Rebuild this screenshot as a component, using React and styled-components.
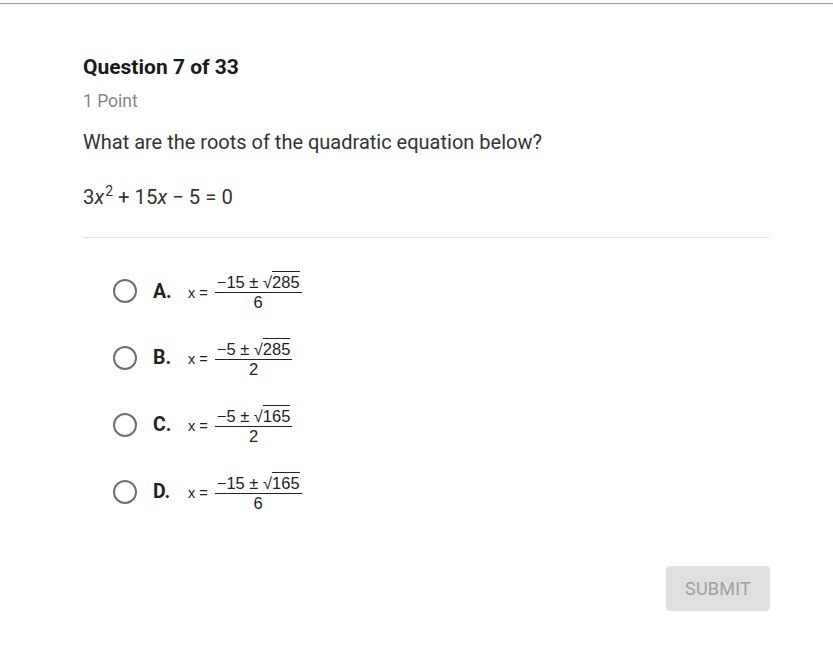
import React from "react";
import styled, { createGlobalStyle } from "styled-components";

const Global = createGlobalStyle`
  body {
    margin: 0;
    background: #ffffff;
    font-family: Roboto, "Liberation Sans", sans-serif;
    color: #222;
  }
`;

const Page = styled.div`
  width: 833px;
  height: 649px;
  box-sizing: border-box;
  border-top: 3px solid #ffffff;
`;

const TopRule = styled.div`
  height: 1px;
  background: #9a9a9a;
  box-shadow: 0 1px 2px rgba(0, 0, 0, 0.12);
`;

const Content = styled.div`
  margin: 0 63px 0 83px;
  padding-top: 50px;
`;

const Title = styled.h1`
  margin: 0;
  font-size: 21px;
  font-weight: 700;
  line-height: 26px;
  color: #1a1a1a;
`;

const Points = styled.div`
  margin-top: 11px;
  font-size: 17.5px;
  line-height: 20px;
  color: #858585;
`;

const Prompt = styled.p`
  margin: 19px 0 0;
  font-size: 20px;
  line-height: 24px;
  color: #333;
`;

const Equation = styled.p`
  margin: 31px 0 0;
  font-size: 20.3px;
  line-height: 24px;
  color: #333;

  i {
    font-style: italic;
  }
  sup {
    font-size: 14px;
    line-height: 0;
    vertical-align: 8px;
    margin-left: 1px;
  }
`;

const Divider = styled.hr`
  margin: 28px 0 0;
  border: 0;
  border-top: 1px solid #e4e4e4;
`;

const Options = styled.div`
  display: flex;
  flex-direction: column;
  gap: 22.9px;
  padding: 31px 0 0 30px;
`;

const Option = styled.label`
  display: flex;
  align-items: center;
  height: 44px;
`;

const Radio = styled.span`
  width: 20px;
  height: 20px;
  border: 2.5px solid #6f6f6f;
  border-radius: 50%;
  flex-shrink: 0;
`;

const Letter = styled.span`
  margin-left: 16px;
  width: 35px;
  font-size: 19.5px;
  font-weight: 700;
  color: #222;
`;

const Math = styled.span`
  display: inline-flex;
  align-items: center;
  font-family: "Liberation Sans", Arial, sans-serif;
  color: #222;
  margin-top: 3px;
`;

const Lhs = styled.span`
  font-size: 14.5px;
  margin-right: 7px;
  i {
    font-style: normal;
  }
`;

const Frac = styled.span`
  display: inline-flex;
  flex-direction: column;
  align-items: center;
  font-size: 16.5px;
  line-height: 17px;
`;

const Num = styled.span`
  padding: 0 2px 1px;
  border-bottom: 1px solid #222;
  white-space: nowrap;
`;

const Den = styled.span`
  padding-top: 1px;
`;

const Radicand = styled.span`
  border-top: 1px solid #222;
  padding-top: 1px;
`;

const Footer = styled.div`
  display: flex;
  justify-content: flex-end;
  margin-top: 52px;
`;

const Submit = styled.button`
  width: 104px;
  height: 45px;
  border: 0;
  border-radius: 4px;
  background: #e0e0e0;
  color: #a0a0a0;
  font-family: Roboto, "Liberation Sans", sans-serif;
  font-size: 18px;
  letter-spacing: 0.2px;
`;

const answers = [
  { letter: "A.", a: "\u221215", r: "285", d: "6" },
  { letter: "B.", a: "\u22125", r: "285", d: "2" },
  { letter: "C.", a: "\u22125", r: "165", d: "2" },
  { letter: "D.", a: "\u221215", r: "165", d: "6" },
];

export default function App() {
  return (
    <Page>
      <Global />
      <TopRule />
      <Content>
        <Title>Question 7 of 33</Title>
        <Points>1 Point</Points>
        <Prompt>What are the roots of the quadratic equation below?</Prompt>
        <Equation>
          3<i>x</i>
          <sup>2</sup> + 15<i>x</i> − 5 = 0
        </Equation>
        <Divider />
        <Options>
          {answers.map((item) => (
            <Option key={item.letter}>
              <Radio />
              <Letter>{item.letter}</Letter>
              <Math>
                <Lhs>
                  <i>x</i> =
                </Lhs>
                <Frac>
                  <Num>
                    {item.a} ± √<Radicand>{item.r}</Radicand>
                  </Num>
                  <Den>{item.d}</Den>
                </Frac>
              </Math>
            </Option>
          ))}
        </Options>
        <Footer>
          <Submit>SUBMIT</Submit>
        </Footer>
      </Content>
    </Page>
  );
}
